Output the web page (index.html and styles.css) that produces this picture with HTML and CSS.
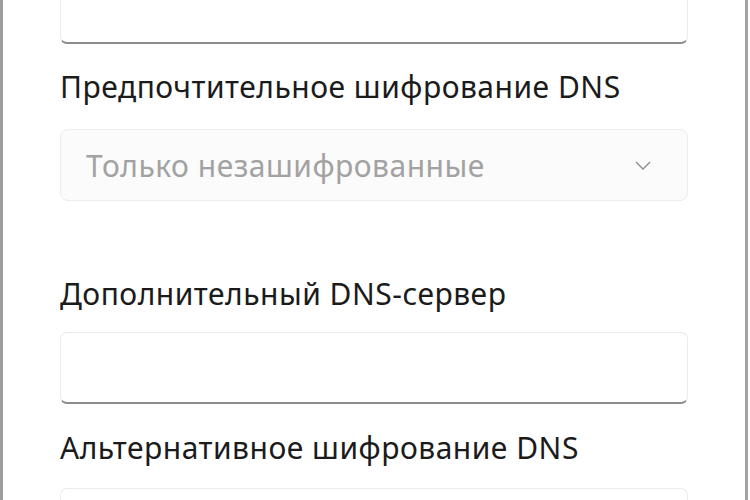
FILE: index.html
```html
<!DOCTYPE html>
<html lang="ru">
<head>
<meta charset="utf-8">
<title>DNS</title>
<link rel="stylesheet" href="styles.css">
</head>
<body>
<div class="frame">
  <div class="panel">
    <div class="field first"><div class="textbox"></div></div>

    <div class="label l1">Предпочтительное шифрование DNS</div>
    <div class="combo">
      <span class="combo-text">Только незашифрованные</span>
      <svg class="chev" width="16" height="9" viewBox="0 0 16 9"><path d="M1 1 L8 8 L15 1" fill="none" stroke="#8a8a8a" stroke-width="1.3"/></svg>
    </div>

    <div class="label l2">Дополнительный DNS-сервер</div>
    <div class="textbox"></div>

    <div class="label l3">Альтернативное шифрование DNS</div>
    <div class="textbox"></div>
  </div>
</div>
</body>
</html>
```

FILE: styles.css
```css
html, body {
  margin: 0;
  padding: 0;
  background: #ffffff;
  width: 750px;
  height: 500px;
  overflow: hidden;
}
.frame {
  width: 748px;
  height: 500px;
  box-sizing: border-box;
  border-left: 3px solid #9c9c9c;
  border-right: 3px solid #a2a2a2;
  background: #ffffff;
  overflow: hidden;
}
.panel {
  padding-left: 57px;
  width: 628px;
  display: flex;
  flex-direction: column;
}
.first .textbox { margin-top: -28px; }
.textbox {
  height: 72px;
  box-sizing: border-box;
  background: #ffffff;
  border: 1px solid #ebebeb;
  border-bottom: 2px solid #8c8c8c;
  border-radius: 7px;
}
.label {
  font-family: "Noto Sans", "Open Sans", sans-serif;
  font-size: 30px;
  letter-spacing: 0.5px;
  line-height: 40px;
  height: 40px;
  color: #1b1b1b;
  white-space: nowrap;
}
.l1 { margin-top: 23px; margin-bottom: 22px; }
.l2 { margin-top: 73px; margin-bottom: 18px; }
.l3 { margin-top: 24px; margin-bottom: 20px; }
.combo {
  height: 72px;
  box-sizing: border-box;
  background: #fbfbfb;
  border: 1px solid #ececec;
  border-radius: 8px;
  display: flex;
  align-items: center;
  justify-content: space-between;
  padding: 0 36px 0 25px;
}
.combo-text {
  font-family: "Noto Sans", "Open Sans", sans-serif;
  font-size: 30px;
  letter-spacing: 0.5px;
  color: #a2a2a2;
  white-space: nowrap;
}
.chev { display: block; }
```
